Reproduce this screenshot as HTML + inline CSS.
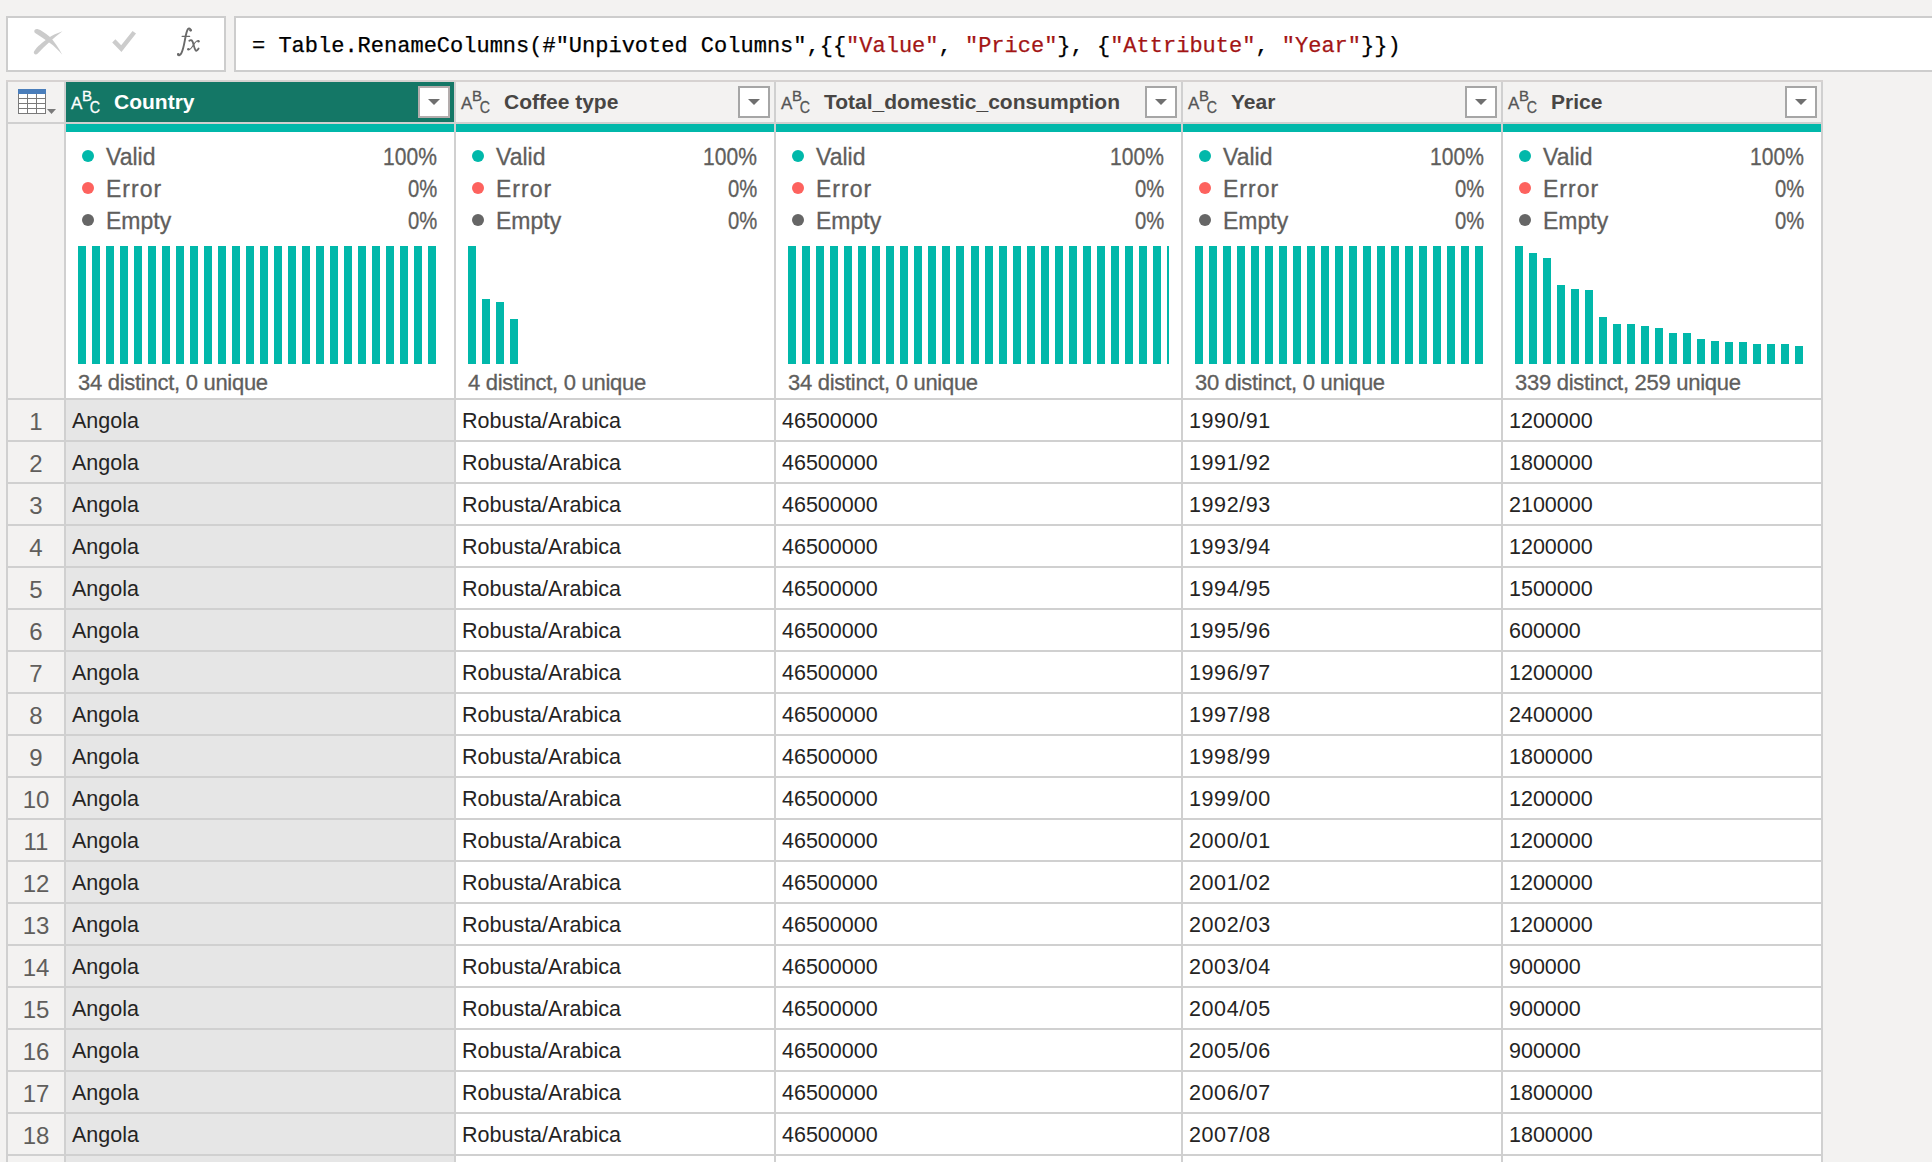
<!DOCTYPE html><html><head><meta charset="utf-8"><style>
*{margin:0;padding:0;box-sizing:border-box}
html,body{width:1932px;height:1162px;overflow:hidden;background:#f3f2f1;font-family:"Liberation Sans",sans-serif}
.a{position:absolute}
.fb{position:absolute;background:#fff;border:2px solid #cdcdcd}
.hdr{position:absolute;top:82px;height:40px;background:#f3f2f1}
.hdr.sel{background:#147766}
.hname{position:absolute;top:0;left:48px;height:40px;line-height:40px;font-weight:bold;font-size:21px;color:#484644;white-space:nowrap}
.sel .hname{color:#fff}
.dd{position:absolute;top:4px;width:32px;height:32px;background:#fff;border:2px solid #a6a6a6}
.sel .dd{border-color:#b4adad}
.tri{position:absolute;left:8px;top:11px;width:0;height:0;border-left:6px solid transparent;border-right:6px solid transparent;border-top:6px solid #6f6f6f}
.abc{position:absolute;left:0;top:0;width:40px;height:40px;color:#605e5c}
.sel .abc{color:#fff}
.st{position:absolute;font-size:23px;color:#605e5c;white-space:nowrap;-webkit-text-stroke:0.3px #605e5c}
.dot{position:absolute;width:12px;height:12px;border-radius:50%}
.bar{position:absolute;background:#01b8aa;width:8px}
.cell{position:absolute;height:40px;line-height:42px;font-size:21.5px;color:#252423;white-space:nowrap;padding-left:6px}
.rn{position:absolute;left:8px;width:56px;height:40px;line-height:44px;text-align:center;font-size:24px;color:#605e5c;background:#f3f2f1}
.hl{position:absolute;height:2px;background:#d0d0d0}
.vl{position:absolute;width:2px;background:#d0d0d0}
.code{position:absolute;left:252px;top:19px;height:56px;line-height:56px;font-family:"Liberation Mono",monospace;font-size:22px;color:#000;white-space:pre;-webkit-text-stroke:0.25px #000}
.s{color:#a31515;-webkit-text-stroke:0.25px #a31515}
</style></head><body>
<div class="fb" style="left:6px;top:16px;width:220px;height:56px"></div>
<div class="fb" style="left:234px;top:16px;width:1720px;height:56px"></div>
<svg class="a" style="left:0;top:0" width="230" height="80" viewBox="0 0 230 80"><path d="M37.4 29 C41 30 45.5 33 50 37 C54 41 58.5 47.5 62.3 54.8 C59 51 55 46.5 48.5 42 C44 39 40 36.3 35.5 33.3 C33.5 32 34 28.5 37.4 29 Z" fill="#cbcbcb"/><path d="M62.5 31.3 C56 33.5 52 35.5 48 38.5 C43 42 37 46.5 34 51.5 C33 53.5 35.5 55.5 37.5 53.8 C41 50 45 46 49 42.5 C53 39 57 35.5 62.5 31.3 Z" fill="#cbcbcb"/><path d="M113.8 40.85 L121.3 48.6 L134.3 32.25" stroke="#cccccc" stroke-width="4.4" fill="none" stroke-linejoin="miter"/></svg>
<svg class="a" style="left:170px;top:20px" width="40" height="45" viewBox="170 20 40 45" fill="none" stroke="#6a6a6a" stroke-linecap="round"><path d="M190.8 30.4 C190.6 28.6 189 27.9 187.9 29.1 C186.6 30.8 185.9 34.5 185 39.5 C184 45 183.2 50 181.2 53.4 C180.2 55.1 178.8 55.7 178 54.6" stroke-width="1.9"/><circle cx="190.6" cy="30.3" r="1.3" fill="#6a6a6a" stroke="none"/><circle cx="178.3" cy="54.2" r="1.3" fill="#6a6a6a" stroke="none"/><path d="M182.2 36.4 H189.6" stroke-width="1.3"/><path d="M189.3 40.7 C190.6 39.9 191.8 40 192.6 41.6 C193.7 44.2 194.4 49.2 195.7 50.5 C196.5 51.2 197.6 50.2 198.6 48.5" stroke-width="1.8"/><path d="M198.4 40.8 C196.8 40.2 195.3 41.8 193.4 45 C191.6 48 190.2 50 188.6 49.4" stroke-width="1.1"/><circle cx="198.5" cy="41.3" r="1.2" fill="#6a6a6a" stroke="none"/><circle cx="188.4" cy="49.2" r="1.3" fill="#6a6a6a" stroke="none"/></svg>
<div class="code">= Table.RenameColumns(#"Unpivoted Columns",{{<span class="s">"Value"</span>, <span class="s">"Price"</span>}, {<span class="s">"Attribute"</span>, <span class="s">"Year"</span>}})</div>
<div class="a" style="left:6px;top:80px;width:1817px;height:1082px;background:#d0d0d0"></div>
<div class="a" style="left:6px;top:80px;width:1817px;height:2px;background:#d6d2d1"></div>
<div class="hdr" style="left:8px;width:56px"></div>
<svg class="a" style="left:18px;top:89px" width="40" height="27" viewBox="0 0 40 27"><rect x="0.5" y="0.5" width="27" height="24" fill="#fff" stroke="#7a7a7a"/><rect x="0" y="0" width="28" height="5" fill="#4a7ebb"/><path d="M0 9.5H28M0 14.5H28M0 19.5H28M9.5 5V25M18.5 5V25" stroke="#7a7a7a" stroke-width="1"/><path d="M29 20 L38 20 L33.5 25 Z" fill="#7a7a7a"/></svg>
<div class="a" style="left:8px;top:124px;width:56px;height:274px;background:#f3f2f1"></div>
<div class="hdr sel" style="left:66px;width:388px">
<svg class="a" style="left:0;top:0" width="40" height="40" viewBox="0 0 40 40" font-family="Liberation Sans" fill="#fff" stroke="#fff" stroke-width="0.3"><text x="5" y="27" font-size="17">A</text><text x="16" y="19.3" font-size="15">B</text><text x="0" y="0" font-size="16.5" transform="translate(23.8 30.9) scale(0.86 1)">C</text></svg>
<div class="hname">Country</div>
<div class="dd" style="left:352px"><div class="tri"></div></div>
</div>
<div class="a" style="left:66px;top:124px;width:388px;height:8px;background:#01b8aa"></div>
<div class="a" style="left:66px;top:132px;width:388px;height:266px;background:#fff;overflow:hidden">
<div class="dot" style="left:16px;top:18px;background:#01b8aa"></div>
<div class="st" style="left:40px;top:11px;line-height:28px;">Valid</div>
<div class="st" style="right:17px;top:11px;line-height:28px;transform:scaleX(0.914);transform-origin:100% 50%">100%</div>
<div class="dot" style="left:16px;top:50px;background:#fd625e"></div>
<div class="st" style="left:40px;top:43px;line-height:28px;letter-spacing:1px;">Error</div>
<div class="st" style="right:17px;top:43px;line-height:28px;transform:scaleX(0.88);transform-origin:100% 50%">0%</div>
<div class="dot" style="left:16px;top:82px;background:#666666"></div>
<div class="st" style="left:40px;top:75px;line-height:28px;">Empty</div>
<div class="st" style="right:17px;top:75px;line-height:28px;transform:scaleX(0.88);transform-origin:100% 50%">0%</div>
<div class="bar" style="left:12px;top:114px;height:118px;width:8px"></div>
<div class="bar" style="left:26px;top:114px;height:118px;width:8px"></div>
<div class="bar" style="left:40px;top:114px;height:118px;width:8px"></div>
<div class="bar" style="left:54px;top:114px;height:118px;width:8px"></div>
<div class="bar" style="left:68px;top:114px;height:118px;width:8px"></div>
<div class="bar" style="left:82px;top:114px;height:118px;width:8px"></div>
<div class="bar" style="left:96px;top:114px;height:118px;width:8px"></div>
<div class="bar" style="left:110px;top:114px;height:118px;width:8px"></div>
<div class="bar" style="left:124px;top:114px;height:118px;width:8px"></div>
<div class="bar" style="left:138px;top:114px;height:118px;width:8px"></div>
<div class="bar" style="left:152px;top:114px;height:118px;width:8px"></div>
<div class="bar" style="left:166px;top:114px;height:118px;width:8px"></div>
<div class="bar" style="left:180px;top:114px;height:118px;width:8px"></div>
<div class="bar" style="left:194px;top:114px;height:118px;width:8px"></div>
<div class="bar" style="left:208px;top:114px;height:118px;width:8px"></div>
<div class="bar" style="left:222px;top:114px;height:118px;width:8px"></div>
<div class="bar" style="left:236px;top:114px;height:118px;width:8px"></div>
<div class="bar" style="left:250px;top:114px;height:118px;width:8px"></div>
<div class="bar" style="left:264px;top:114px;height:118px;width:8px"></div>
<div class="bar" style="left:278px;top:114px;height:118px;width:8px"></div>
<div class="bar" style="left:292px;top:114px;height:118px;width:8px"></div>
<div class="bar" style="left:306px;top:114px;height:118px;width:8px"></div>
<div class="bar" style="left:320px;top:114px;height:118px;width:8px"></div>
<div class="bar" style="left:334px;top:114px;height:118px;width:8px"></div>
<div class="bar" style="left:348px;top:114px;height:118px;width:8px"></div>
<div class="bar" style="left:362px;top:114px;height:118px;width:8px"></div>
<div class="st" style="left:12px;top:237px;line-height:28px;font-size:22px;letter-spacing:-0.28px">34 distinct, 0 unique</div>
</div>
<div class="hdr" style="left:456px;width:318px">
<svg class="a" style="left:0;top:0" width="40" height="40" viewBox="0 0 40 40" font-family="Liberation Sans" fill="#555555" stroke="#555555" stroke-width="0.3"><text x="5" y="27" font-size="17">A</text><text x="16" y="19.3" font-size="15">B</text><text x="0" y="0" font-size="16.5" transform="translate(23.8 30.9) scale(0.86 1)">C</text></svg>
<div class="hname">Coffee type</div>
<div class="dd" style="left:282px"><div class="tri"></div></div>
</div>
<div class="a" style="left:456px;top:124px;width:318px;height:8px;background:#01b8aa"></div>
<div class="a" style="left:456px;top:132px;width:318px;height:266px;background:#fff;overflow:hidden">
<div class="dot" style="left:16px;top:18px;background:#01b8aa"></div>
<div class="st" style="left:40px;top:11px;line-height:28px;">Valid</div>
<div class="st" style="right:17px;top:11px;line-height:28px;transform:scaleX(0.914);transform-origin:100% 50%">100%</div>
<div class="dot" style="left:16px;top:50px;background:#fd625e"></div>
<div class="st" style="left:40px;top:43px;line-height:28px;letter-spacing:1px;">Error</div>
<div class="st" style="right:17px;top:43px;line-height:28px;transform:scaleX(0.88);transform-origin:100% 50%">0%</div>
<div class="dot" style="left:16px;top:82px;background:#666666"></div>
<div class="st" style="left:40px;top:75px;line-height:28px;">Empty</div>
<div class="st" style="right:17px;top:75px;line-height:28px;transform:scaleX(0.88);transform-origin:100% 50%">0%</div>
<div class="bar" style="left:12px;top:114px;height:118px"></div>
<div class="bar" style="left:26px;top:167px;height:65px"></div>
<div class="bar" style="left:40px;top:170px;height:62px"></div>
<div class="bar" style="left:54px;top:187px;height:45px"></div>
<div class="st" style="left:12px;top:237px;line-height:28px;font-size:22px;letter-spacing:-0.28px">4 distinct, 0 unique</div>
</div>
<div class="hdr" style="left:776px;width:405px">
<svg class="a" style="left:0;top:0" width="40" height="40" viewBox="0 0 40 40" font-family="Liberation Sans" fill="#555555" stroke="#555555" stroke-width="0.3"><text x="5" y="27" font-size="17">A</text><text x="16" y="19.3" font-size="15">B</text><text x="0" y="0" font-size="16.5" transform="translate(23.8 30.9) scale(0.86 1)">C</text></svg>
<div class="hname">Total_domestic_consumption</div>
<div class="dd" style="left:369px"><div class="tri"></div></div>
</div>
<div class="a" style="left:776px;top:124px;width:405px;height:8px;background:#01b8aa"></div>
<div class="a" style="left:776px;top:132px;width:405px;height:266px;background:#fff;overflow:hidden">
<div class="dot" style="left:16px;top:18px;background:#01b8aa"></div>
<div class="st" style="left:40px;top:11px;line-height:28px;">Valid</div>
<div class="st" style="right:17px;top:11px;line-height:28px;transform:scaleX(0.914);transform-origin:100% 50%">100%</div>
<div class="dot" style="left:16px;top:50px;background:#fd625e"></div>
<div class="st" style="left:40px;top:43px;line-height:28px;letter-spacing:1px;">Error</div>
<div class="st" style="right:17px;top:43px;line-height:28px;transform:scaleX(0.88);transform-origin:100% 50%">0%</div>
<div class="dot" style="left:16px;top:82px;background:#666666"></div>
<div class="st" style="left:40px;top:75px;line-height:28px;">Empty</div>
<div class="st" style="right:17px;top:75px;line-height:28px;transform:scaleX(0.88);transform-origin:100% 50%">0%</div>
<div class="bar" style="left:12px;top:114px;height:118px;width:8px"></div>
<div class="bar" style="left:26px;top:114px;height:118px;width:8px"></div>
<div class="bar" style="left:40px;top:114px;height:118px;width:8px"></div>
<div class="bar" style="left:54px;top:114px;height:118px;width:8px"></div>
<div class="bar" style="left:68px;top:114px;height:118px;width:8px"></div>
<div class="bar" style="left:82px;top:114px;height:118px;width:8px"></div>
<div class="bar" style="left:96px;top:114px;height:118px;width:8px"></div>
<div class="bar" style="left:110px;top:114px;height:118px;width:8px"></div>
<div class="bar" style="left:124px;top:114px;height:118px;width:8px"></div>
<div class="bar" style="left:138px;top:114px;height:118px;width:8px"></div>
<div class="bar" style="left:152px;top:114px;height:118px;width:8px"></div>
<div class="bar" style="left:166px;top:114px;height:118px;width:8px"></div>
<div class="bar" style="left:180px;top:114px;height:118px;width:8px"></div>
<div class="bar" style="left:195px;top:114px;height:118px;width:8px"></div>
<div class="bar" style="left:209px;top:114px;height:118px;width:8px"></div>
<div class="bar" style="left:223px;top:114px;height:118px;width:8px"></div>
<div class="bar" style="left:237px;top:114px;height:118px;width:8px"></div>
<div class="bar" style="left:251px;top:114px;height:118px;width:8px"></div>
<div class="bar" style="left:265px;top:114px;height:118px;width:8px"></div>
<div class="bar" style="left:279px;top:114px;height:118px;width:8px"></div>
<div class="bar" style="left:293px;top:114px;height:118px;width:8px"></div>
<div class="bar" style="left:307px;top:114px;height:118px;width:8px"></div>
<div class="bar" style="left:321px;top:114px;height:118px;width:8px"></div>
<div class="bar" style="left:335px;top:114px;height:118px;width:8px"></div>
<div class="bar" style="left:349px;top:114px;height:118px;width:8px"></div>
<div class="bar" style="left:363px;top:114px;height:118px;width:8px"></div>
<div class="bar" style="left:377px;top:114px;height:118px;width:8px"></div>
<div class="bar" style="left:391px;top:114px;height:118px;width:2px"></div>
<div class="st" style="left:12px;top:237px;line-height:28px;font-size:22px;letter-spacing:-0.28px">34 distinct, 0 unique</div>
</div>
<div class="hdr" style="left:1183px;width:318px">
<svg class="a" style="left:0;top:0" width="40" height="40" viewBox="0 0 40 40" font-family="Liberation Sans" fill="#555555" stroke="#555555" stroke-width="0.3"><text x="5" y="27" font-size="17">A</text><text x="16" y="19.3" font-size="15">B</text><text x="0" y="0" font-size="16.5" transform="translate(23.8 30.9) scale(0.86 1)">C</text></svg>
<div class="hname">Year</div>
<div class="dd" style="left:282px"><div class="tri"></div></div>
</div>
<div class="a" style="left:1183px;top:124px;width:318px;height:8px;background:#01b8aa"></div>
<div class="a" style="left:1183px;top:132px;width:318px;height:266px;background:#fff;overflow:hidden">
<div class="dot" style="left:16px;top:18px;background:#01b8aa"></div>
<div class="st" style="left:40px;top:11px;line-height:28px;">Valid</div>
<div class="st" style="right:17px;top:11px;line-height:28px;transform:scaleX(0.914);transform-origin:100% 50%">100%</div>
<div class="dot" style="left:16px;top:50px;background:#fd625e"></div>
<div class="st" style="left:40px;top:43px;line-height:28px;letter-spacing:1px;">Error</div>
<div class="st" style="right:17px;top:43px;line-height:28px;transform:scaleX(0.88);transform-origin:100% 50%">0%</div>
<div class="dot" style="left:16px;top:82px;background:#666666"></div>
<div class="st" style="left:40px;top:75px;line-height:28px;">Empty</div>
<div class="st" style="right:17px;top:75px;line-height:28px;transform:scaleX(0.88);transform-origin:100% 50%">0%</div>
<div class="bar" style="left:12px;top:114px;height:118px;width:8px"></div>
<div class="bar" style="left:26px;top:114px;height:118px;width:8px"></div>
<div class="bar" style="left:40px;top:114px;height:118px;width:8px"></div>
<div class="bar" style="left:54px;top:114px;height:118px;width:8px"></div>
<div class="bar" style="left:68px;top:114px;height:118px;width:8px"></div>
<div class="bar" style="left:82px;top:114px;height:118px;width:8px"></div>
<div class="bar" style="left:96px;top:114px;height:118px;width:8px"></div>
<div class="bar" style="left:110px;top:114px;height:118px;width:8px"></div>
<div class="bar" style="left:124px;top:114px;height:118px;width:8px"></div>
<div class="bar" style="left:138px;top:114px;height:118px;width:8px"></div>
<div class="bar" style="left:152px;top:114px;height:118px;width:8px"></div>
<div class="bar" style="left:166px;top:114px;height:118px;width:8px"></div>
<div class="bar" style="left:180px;top:114px;height:118px;width:8px"></div>
<div class="bar" style="left:194px;top:114px;height:118px;width:8px"></div>
<div class="bar" style="left:208px;top:114px;height:118px;width:8px"></div>
<div class="bar" style="left:222px;top:114px;height:118px;width:8px"></div>
<div class="bar" style="left:236px;top:114px;height:118px;width:8px"></div>
<div class="bar" style="left:250px;top:114px;height:118px;width:8px"></div>
<div class="bar" style="left:264px;top:114px;height:118px;width:8px"></div>
<div class="bar" style="left:278px;top:114px;height:118px;width:8px"></div>
<div class="bar" style="left:292px;top:114px;height:118px;width:8px"></div>
<div class="st" style="left:12px;top:237px;line-height:28px;font-size:22px;letter-spacing:-0.28px">30 distinct, 0 unique</div>
</div>
<div class="hdr" style="left:1503px;width:318px">
<svg class="a" style="left:0;top:0" width="40" height="40" viewBox="0 0 40 40" font-family="Liberation Sans" fill="#555555" stroke="#555555" stroke-width="0.3"><text x="5" y="27" font-size="17">A</text><text x="16" y="19.3" font-size="15">B</text><text x="0" y="0" font-size="16.5" transform="translate(23.8 30.9) scale(0.86 1)">C</text></svg>
<div class="hname">Price</div>
<div class="dd" style="left:282px"><div class="tri"></div></div>
</div>
<div class="a" style="left:1503px;top:124px;width:318px;height:8px;background:#01b8aa"></div>
<div class="a" style="left:1503px;top:132px;width:318px;height:266px;background:#fff;overflow:hidden">
<div class="dot" style="left:16px;top:18px;background:#01b8aa"></div>
<div class="st" style="left:40px;top:11px;line-height:28px;">Valid</div>
<div class="st" style="right:17px;top:11px;line-height:28px;transform:scaleX(0.914);transform-origin:100% 50%">100%</div>
<div class="dot" style="left:16px;top:50px;background:#fd625e"></div>
<div class="st" style="left:40px;top:43px;line-height:28px;letter-spacing:1px;">Error</div>
<div class="st" style="right:17px;top:43px;line-height:28px;transform:scaleX(0.88);transform-origin:100% 50%">0%</div>
<div class="dot" style="left:16px;top:82px;background:#666666"></div>
<div class="st" style="left:40px;top:75px;line-height:28px;">Empty</div>
<div class="st" style="right:17px;top:75px;line-height:28px;transform:scaleX(0.88);transform-origin:100% 50%">0%</div>
<div class="bar" style="left:12px;top:114px;height:118px"></div>
<div class="bar" style="left:26px;top:121px;height:111px"></div>
<div class="bar" style="left:40px;top:126px;height:106px"></div>
<div class="bar" style="left:54px;top:153px;height:79px"></div>
<div class="bar" style="left:68px;top:157px;height:75px"></div>
<div class="bar" style="left:82px;top:158px;height:74px"></div>
<div class="bar" style="left:96px;top:185px;height:47px"></div>
<div class="bar" style="left:110px;top:192px;height:40px"></div>
<div class="bar" style="left:124px;top:192px;height:40px"></div>
<div class="bar" style="left:138px;top:194px;height:38px"></div>
<div class="bar" style="left:152px;top:196px;height:36px"></div>
<div class="bar" style="left:166px;top:201px;height:31px"></div>
<div class="bar" style="left:180px;top:201px;height:31px"></div>
<div class="bar" style="left:194px;top:207px;height:25px"></div>
<div class="bar" style="left:208px;top:209px;height:23px"></div>
<div class="bar" style="left:222px;top:210px;height:22px"></div>
<div class="bar" style="left:236px;top:210px;height:22px"></div>
<div class="bar" style="left:250px;top:212px;height:20px"></div>
<div class="bar" style="left:264px;top:212px;height:20px"></div>
<div class="bar" style="left:278px;top:212px;height:20px"></div>
<div class="bar" style="left:292px;top:214px;height:18px"></div>
<div class="st" style="left:12px;top:237px;line-height:28px;font-size:22px;letter-spacing:-0.28px">339 distinct, 259 unique</div>
</div>
<div class="rn" style="top:400px">1</div>
<div class="cell" style="left:66px;top:400px;width:388px;background:#e6e6e6;">Angola</div>
<div class="cell" style="left:456px;top:400px;width:318px;background:#fff;">Robusta/Arabica</div>
<div class="cell" style="left:776px;top:400px;width:405px;background:#fff;">46500000</div>
<div class="cell" style="left:1183px;top:400px;width:318px;background:#fff;letter-spacing:0.6px;">1990/91</div>
<div class="cell" style="left:1503px;top:400px;width:318px;background:#fff;">1200000</div>
<div class="rn" style="top:442px">2</div>
<div class="cell" style="left:66px;top:442px;width:388px;background:#e6e6e6;">Angola</div>
<div class="cell" style="left:456px;top:442px;width:318px;background:#fff;">Robusta/Arabica</div>
<div class="cell" style="left:776px;top:442px;width:405px;background:#fff;">46500000</div>
<div class="cell" style="left:1183px;top:442px;width:318px;background:#fff;letter-spacing:0.6px;">1991/92</div>
<div class="cell" style="left:1503px;top:442px;width:318px;background:#fff;">1800000</div>
<div class="rn" style="top:484px">3</div>
<div class="cell" style="left:66px;top:484px;width:388px;background:#e6e6e6;">Angola</div>
<div class="cell" style="left:456px;top:484px;width:318px;background:#fff;">Robusta/Arabica</div>
<div class="cell" style="left:776px;top:484px;width:405px;background:#fff;">46500000</div>
<div class="cell" style="left:1183px;top:484px;width:318px;background:#fff;letter-spacing:0.6px;">1992/93</div>
<div class="cell" style="left:1503px;top:484px;width:318px;background:#fff;">2100000</div>
<div class="rn" style="top:526px">4</div>
<div class="cell" style="left:66px;top:526px;width:388px;background:#e6e6e6;">Angola</div>
<div class="cell" style="left:456px;top:526px;width:318px;background:#fff;">Robusta/Arabica</div>
<div class="cell" style="left:776px;top:526px;width:405px;background:#fff;">46500000</div>
<div class="cell" style="left:1183px;top:526px;width:318px;background:#fff;letter-spacing:0.6px;">1993/94</div>
<div class="cell" style="left:1503px;top:526px;width:318px;background:#fff;">1200000</div>
<div class="rn" style="top:568px">5</div>
<div class="cell" style="left:66px;top:568px;width:388px;background:#e6e6e6;">Angola</div>
<div class="cell" style="left:456px;top:568px;width:318px;background:#fff;">Robusta/Arabica</div>
<div class="cell" style="left:776px;top:568px;width:405px;background:#fff;">46500000</div>
<div class="cell" style="left:1183px;top:568px;width:318px;background:#fff;letter-spacing:0.6px;">1994/95</div>
<div class="cell" style="left:1503px;top:568px;width:318px;background:#fff;">1500000</div>
<div class="rn" style="top:610px">6</div>
<div class="cell" style="left:66px;top:610px;width:388px;background:#e6e6e6;">Angola</div>
<div class="cell" style="left:456px;top:610px;width:318px;background:#fff;">Robusta/Arabica</div>
<div class="cell" style="left:776px;top:610px;width:405px;background:#fff;">46500000</div>
<div class="cell" style="left:1183px;top:610px;width:318px;background:#fff;letter-spacing:0.6px;">1995/96</div>
<div class="cell" style="left:1503px;top:610px;width:318px;background:#fff;">600000</div>
<div class="rn" style="top:652px">7</div>
<div class="cell" style="left:66px;top:652px;width:388px;background:#e6e6e6;">Angola</div>
<div class="cell" style="left:456px;top:652px;width:318px;background:#fff;">Robusta/Arabica</div>
<div class="cell" style="left:776px;top:652px;width:405px;background:#fff;">46500000</div>
<div class="cell" style="left:1183px;top:652px;width:318px;background:#fff;letter-spacing:0.6px;">1996/97</div>
<div class="cell" style="left:1503px;top:652px;width:318px;background:#fff;">1200000</div>
<div class="rn" style="top:694px">8</div>
<div class="cell" style="left:66px;top:694px;width:388px;background:#e6e6e6;">Angola</div>
<div class="cell" style="left:456px;top:694px;width:318px;background:#fff;">Robusta/Arabica</div>
<div class="cell" style="left:776px;top:694px;width:405px;background:#fff;">46500000</div>
<div class="cell" style="left:1183px;top:694px;width:318px;background:#fff;letter-spacing:0.6px;">1997/98</div>
<div class="cell" style="left:1503px;top:694px;width:318px;background:#fff;">2400000</div>
<div class="rn" style="top:736px">9</div>
<div class="cell" style="left:66px;top:736px;width:388px;background:#e6e6e6;">Angola</div>
<div class="cell" style="left:456px;top:736px;width:318px;background:#fff;">Robusta/Arabica</div>
<div class="cell" style="left:776px;top:736px;width:405px;background:#fff;">46500000</div>
<div class="cell" style="left:1183px;top:736px;width:318px;background:#fff;letter-spacing:0.6px;">1998/99</div>
<div class="cell" style="left:1503px;top:736px;width:318px;background:#fff;">1800000</div>
<div class="rn" style="top:778px">10</div>
<div class="cell" style="left:66px;top:778px;width:388px;background:#e6e6e6;">Angola</div>
<div class="cell" style="left:456px;top:778px;width:318px;background:#fff;">Robusta/Arabica</div>
<div class="cell" style="left:776px;top:778px;width:405px;background:#fff;">46500000</div>
<div class="cell" style="left:1183px;top:778px;width:318px;background:#fff;letter-spacing:0.6px;">1999/00</div>
<div class="cell" style="left:1503px;top:778px;width:318px;background:#fff;">1200000</div>
<div class="rn" style="top:820px">11</div>
<div class="cell" style="left:66px;top:820px;width:388px;background:#e6e6e6;">Angola</div>
<div class="cell" style="left:456px;top:820px;width:318px;background:#fff;">Robusta/Arabica</div>
<div class="cell" style="left:776px;top:820px;width:405px;background:#fff;">46500000</div>
<div class="cell" style="left:1183px;top:820px;width:318px;background:#fff;letter-spacing:0.6px;">2000/01</div>
<div class="cell" style="left:1503px;top:820px;width:318px;background:#fff;">1200000</div>
<div class="rn" style="top:862px">12</div>
<div class="cell" style="left:66px;top:862px;width:388px;background:#e6e6e6;">Angola</div>
<div class="cell" style="left:456px;top:862px;width:318px;background:#fff;">Robusta/Arabica</div>
<div class="cell" style="left:776px;top:862px;width:405px;background:#fff;">46500000</div>
<div class="cell" style="left:1183px;top:862px;width:318px;background:#fff;letter-spacing:0.6px;">2001/02</div>
<div class="cell" style="left:1503px;top:862px;width:318px;background:#fff;">1200000</div>
<div class="rn" style="top:904px">13</div>
<div class="cell" style="left:66px;top:904px;width:388px;background:#e6e6e6;">Angola</div>
<div class="cell" style="left:456px;top:904px;width:318px;background:#fff;">Robusta/Arabica</div>
<div class="cell" style="left:776px;top:904px;width:405px;background:#fff;">46500000</div>
<div class="cell" style="left:1183px;top:904px;width:318px;background:#fff;letter-spacing:0.6px;">2002/03</div>
<div class="cell" style="left:1503px;top:904px;width:318px;background:#fff;">1200000</div>
<div class="rn" style="top:946px">14</div>
<div class="cell" style="left:66px;top:946px;width:388px;background:#e6e6e6;">Angola</div>
<div class="cell" style="left:456px;top:946px;width:318px;background:#fff;">Robusta/Arabica</div>
<div class="cell" style="left:776px;top:946px;width:405px;background:#fff;">46500000</div>
<div class="cell" style="left:1183px;top:946px;width:318px;background:#fff;letter-spacing:0.6px;">2003/04</div>
<div class="cell" style="left:1503px;top:946px;width:318px;background:#fff;">900000</div>
<div class="rn" style="top:988px">15</div>
<div class="cell" style="left:66px;top:988px;width:388px;background:#e6e6e6;">Angola</div>
<div class="cell" style="left:456px;top:988px;width:318px;background:#fff;">Robusta/Arabica</div>
<div class="cell" style="left:776px;top:988px;width:405px;background:#fff;">46500000</div>
<div class="cell" style="left:1183px;top:988px;width:318px;background:#fff;letter-spacing:0.6px;">2004/05</div>
<div class="cell" style="left:1503px;top:988px;width:318px;background:#fff;">900000</div>
<div class="rn" style="top:1030px">16</div>
<div class="cell" style="left:66px;top:1030px;width:388px;background:#e6e6e6;">Angola</div>
<div class="cell" style="left:456px;top:1030px;width:318px;background:#fff;">Robusta/Arabica</div>
<div class="cell" style="left:776px;top:1030px;width:405px;background:#fff;">46500000</div>
<div class="cell" style="left:1183px;top:1030px;width:318px;background:#fff;letter-spacing:0.6px;">2005/06</div>
<div class="cell" style="left:1503px;top:1030px;width:318px;background:#fff;">900000</div>
<div class="rn" style="top:1072px">17</div>
<div class="cell" style="left:66px;top:1072px;width:388px;background:#e6e6e6;">Angola</div>
<div class="cell" style="left:456px;top:1072px;width:318px;background:#fff;">Robusta/Arabica</div>
<div class="cell" style="left:776px;top:1072px;width:405px;background:#fff;">46500000</div>
<div class="cell" style="left:1183px;top:1072px;width:318px;background:#fff;letter-spacing:0.6px;">2006/07</div>
<div class="cell" style="left:1503px;top:1072px;width:318px;background:#fff;">1800000</div>
<div class="rn" style="top:1114px">18</div>
<div class="cell" style="left:66px;top:1114px;width:388px;background:#e6e6e6;">Angola</div>
<div class="cell" style="left:456px;top:1114px;width:318px;background:#fff;">Robusta/Arabica</div>
<div class="cell" style="left:776px;top:1114px;width:405px;background:#fff;">46500000</div>
<div class="cell" style="left:1183px;top:1114px;width:318px;background:#fff;letter-spacing:0.6px;">2007/08</div>
<div class="cell" style="left:1503px;top:1114px;width:318px;background:#fff;">1800000</div>
<div class="rn" style="top:1156px">19</div>
<div class="cell" style="left:66px;top:1156px;width:388px;background:#e6e6e6;">Angola</div>
<div class="cell" style="left:456px;top:1156px;width:318px;background:#fff;">Robusta/Arabica</div>
<div class="cell" style="left:776px;top:1156px;width:405px;background:#fff;">46500000</div>
<div class="cell" style="left:1183px;top:1156px;width:318px;background:#fff;letter-spacing:0.6px;">2008/09</div>
<div class="cell" style="left:1503px;top:1156px;width:318px;background:#fff;">1800000</div>
</body></html>
